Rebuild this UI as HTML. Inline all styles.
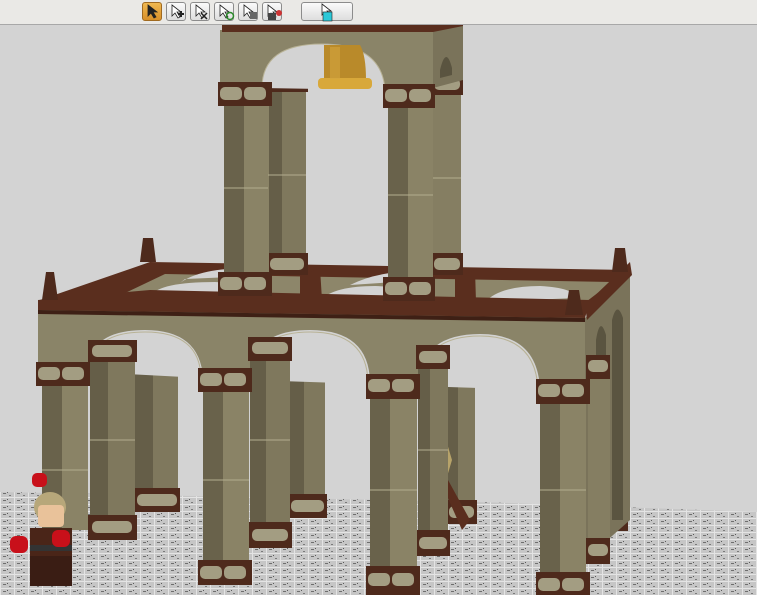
<!DOCTYPE html>
<html><head><style>
html,body{margin:0;padding:0;width:757px;height:595px;overflow:hidden;background:#d3d3d3;font-family:"Liberation Sans",sans-serif}
#tb{position:absolute;left:0;top:0;width:757px;height:24px;background:#eae9e6;border-bottom:1px solid #a8a8a8}
.b{position:absolute;top:2px;width:20px;height:19px;border:1px solid #8c8c8c;border-radius:3px;background:linear-gradient(#fafafa,#dedede);box-sizing:border-box}
.b.on{background:linear-gradient(#f0b850,#d8902a);border-color:#a06a20}
svg{position:absolute;left:0;top:0}
</style></head><body>
<svg width="757" height="595" viewBox="0 0 757 595">
<defs>
<pattern id="fl" width="14" height="7" patternUnits="userSpaceOnUse">
<rect width="14" height="7" fill="#c6c6c6"/>
<rect x="0" y="0" width="14" height="1" fill="#e4e4e4"/>
<rect x="0" y="0" width="1" height="7" fill="#e4e4e4"/>
<rect x="3" y="3" width="3" height="1" fill="#6e6e6e"/>
<rect x="9" y="5" width="2" height="1" fill="#7a7a7a"/>
<rect x="7" y="2" width="1" height="1" fill="#5a5a5a"/>
</pattern>
</defs>
<!-- floor -->
<polygon points="0,492 480,502 757,512 757,595 0,595" fill="url(#fl)"/>

<!-- back deck of lower structure -->
<polygon points="40,300 150,262 630,270 630,285 585,312" fill="#5a2e1e"/>
<polygon points="100,305 165,274 612,282 578,308" fill="#8d866a"/>
<polygon points="100,305 110,296 575,302 578,308" fill="#5a2e1e"/>
<path d="M150,296 Q160,282 215,282 Q260,284 270,298 Z M320,300 Q335,286 375,286 Q410,287 420,301 Z M485,302 Q500,286 540,286 Q575,288 575,298 Z" fill="#d3d3d3"/>
<path d="M180,283 Q200,268 250,268 L255,276 L185,279 Z M350,285 Q380,270 420,272 L425,280 Z" fill="#d3d3d3"/>
<polygon points="300,276 320,268 322,300 300,300" fill="#5a2e1e"/>
<polygon points="455,278 475,270 476,302 455,302" fill="#5a2e1e"/>

<!-- back columns lower -->
<g>
<rect x="135" y="330" width="43" height="170" fill="#7f785d"/><rect x="135" y="330" width="18" height="170" fill="#655e48"/>
<rect x="133" y="326" width="47" height="20" fill="#4e2a1c"/><rect x="137" y="330" width="40" height="12" rx="5" fill="#a39d82"/>
<rect x="133" y="488" width="47" height="24" fill="#4e2a1c"/><rect x="137" y="494" width="40" height="12" rx="5" fill="#a39d82"/>
<rect x="290" y="332" width="35" height="170" fill="#7f785d"/><rect x="290" y="332" width="14" height="170" fill="#655e48"/>
<rect x="288" y="328" width="39" height="18" fill="#4e2a1c"/><rect x="291" y="331" width="33" height="12" rx="5" fill="#a39d82"/>
<rect x="288" y="494" width="39" height="24" fill="#4e2a1c"/><rect x="291" y="500" width="33" height="12" rx="5" fill="#a39d82"/>
<rect x="448" y="340" width="27" height="180" fill="#7f785d"/><rect x="448" y="340" width="10" height="180" fill="#655e48"/>
<rect x="446" y="336" width="31" height="16" fill="#4e2a1c"/>
<rect x="446" y="500" width="31" height="24" fill="#4e2a1c"/><rect x="449" y="506" width="25" height="12" rx="5" fill="#a39d82"/>
<rect x="610" y="335" width="18" height="180" fill="#857e62"/>
<rect x="606" y="505" width="22" height="26" fill="#4e2a1c"/><rect x="608" y="511" width="18" height="12" rx="5" fill="#a39d82"/>
</g>
<!-- brace -->
<polygon points="440,480 448,480 470,520 462,530" fill="#5a2e1e"/>
<polygon points="443,430 452,460 446,480" fill="#b7a36a"/>

<!-- front face of lower structure -->
<polygon points="38,305 585,318 585,385 38,372" fill="#8a8468"/>
<polygon points="38,300 150,290 590,300 585,318 38,310" fill="#5a2e1e"/>
<polygon points="38,310 585,318 585,322 38,314" fill="#3e2015"/>
<path d="M88,372 Q88,330 145,330 Q200,330 203,378 Z M250,380 Q250,330 310,330 Q370,330 370,384 Z M418,386 Q420,334 480,334 Q538,334 540,390 Z" fill="#d3d3d3"/>
<path d="M90,372 Q90,332 145,332 Q200,332 201,378" fill="none" stroke="#b8b295" stroke-width="1"/>
<path d="M252,380 Q252,332 310,332 Q368,332 368,384" fill="none" stroke="#b8b295" stroke-width="1"/>
<path d="M420,386 Q422,336 480,336 Q536,336 538,390" fill="none" stroke="#b8b295" stroke-width="1"/>
<!-- right side face -->
<polygon points="585,318 630,275 630,520 585,560" fill="#7a735a"/>
<polygon points="585,305 630,262 632,275 587,320" fill="#5a2e1e"/>
<path d="M596,340 Q600,315 606,335 L606,560 L596,560 Z M612,320 Q617,300 623,318 L623,520 L612,520 Z" fill="#5a5440"/>
<!-- cones -->
<polygon points="42,300 46,272 54,272 58,300" fill="#4e2a1c"/>
<polygon points="140,262 143,238 153,238 156,262" fill="#4e2a1c"/>
<polygon points="565,315 569,290 579,290 583,315" fill="#4e2a1c"/>
<polygon points="612,272 615,248 625,248 628,272" fill="#4e2a1c"/>

<!-- back front-row lower columns -->
<rect x="90" y="345" width="45" height="180" fill="#7f785d"/><rect x="90" y="345" width="18" height="180" fill="#655e48"/>
<rect x="88" y="340" width="49" height="22" fill="#4e2a1c"/><rect x="92" y="345" width="40" height="12" rx="5" fill="#a39d82"/>
<rect x="88" y="515" width="49" height="25" fill="#4e2a1c"/><rect x="92" y="521" width="40" height="12" rx="5" fill="#a39d82"/>
<rect x="250" y="345" width="40" height="185" fill="#7f785d"/><rect x="250" y="345" width="16" height="185" fill="#655e48"/>
<rect x="248" y="337" width="44" height="24" fill="#4e2a1c"/><rect x="252" y="342" width="36" height="12" rx="5" fill="#a39d82"/>
<rect x="248" y="522" width="44" height="26" fill="#4e2a1c"/><rect x="252" y="529" width="36" height="12" rx="5" fill="#a39d82"/>
<rect x="418" y="355" width="30" height="185" fill="#7f785d"/><rect x="418" y="355" width="12" height="185" fill="#655e48"/>
<rect x="416" y="345" width="34" height="24" fill="#4e2a1c"/><rect x="419" y="351" width="28" height="12" rx="5" fill="#a39d82"/>
<rect x="416" y="530" width="34" height="26" fill="#4e2a1c"/><rect x="419" y="537" width="28" height="12" rx="5" fill="#a39d82"/>
<rect x="588" y="360" width="22" height="185" fill="#857e62"/>
<rect x="586" y="355" width="24" height="24" fill="#4e2a1c"/><rect x="588" y="360" width="20" height="12" rx="5" fill="#a39d82"/>
<rect x="586" y="538" width="24" height="26" fill="#4e2a1c"/><rect x="588" y="544" width="20" height="12" rx="5" fill="#a39d82"/>

<!-- front columns -->
<g>
<rect x="42" y="385" width="46" height="145" fill="#8a8366"/><rect x="42" y="385" width="20" height="145" fill="#69624b"/>
<rect x="36" y="362" width="54" height="24" fill="#4e2a1c"/><rect x="38" y="367" width="22" height="13" rx="5" fill="#a39d82"/><rect x="62" y="367" width="22" height="13" rx="5" fill="#a39d82"/>
<rect x="203" y="392" width="46" height="170" fill="#8a8366"/><rect x="203" y="392" width="20" height="170" fill="#69624b"/>
<rect x="198" y="368" width="54" height="24" fill="#4e2a1c"/><rect x="200" y="373" width="22" height="13" rx="5" fill="#a39d82"/><rect x="224" y="373" width="22" height="13" rx="5" fill="#a39d82"/>
<rect x="198" y="560" width="54" height="25" fill="#4e2a1c"/><rect x="200" y="566" width="22" height="13" rx="5" fill="#a39d82"/><rect x="224" y="566" width="22" height="13" rx="5" fill="#a39d82"/>
<rect x="370" y="398" width="47" height="170" fill="#8a8366"/><rect x="370" y="398" width="20" height="170" fill="#69624b"/>
<rect x="366" y="374" width="54" height="25" fill="#4e2a1c"/><rect x="368" y="379" width="22" height="13" rx="5" fill="#a39d82"/><rect x="392" y="379" width="22" height="13" rx="5" fill="#a39d82"/>
<rect x="366" y="566" width="54" height="29" fill="#4e2a1c"/><rect x="368" y="573" width="22" height="13" rx="5" fill="#a39d82"/><rect x="392" y="573" width="22" height="13" rx="5" fill="#a39d82"/>
<rect x="540" y="404" width="46" height="170" fill="#8a8366"/><rect x="540" y="404" width="20" height="170" fill="#69624b"/>
<rect x="536" y="379" width="54" height="25" fill="#4e2a1c"/><rect x="538" y="384" width="22" height="13" rx="5" fill="#a39d82"/><rect x="562" y="384" width="22" height="13" rx="5" fill="#a39d82"/>
<rect x="536" y="572" width="54" height="23" fill="#4e2a1c"/><rect x="538" y="578" width="22" height="13" rx="5" fill="#a39d82"/><rect x="562" y="578" width="22" height="13" rx="5" fill="#a39d82"/>
</g>
<g stroke="#b3ad8f" stroke-width="1" fill="none">
<path d="M42,470 L88,470 M203,480 L249,480 M370,490 L417,490 M540,490 L586,490 M90,440 L135,440 M250,440 L290,440 M418,450 L448,450"/>
</g>

<!-- TOWER -->
<rect x="268" y="72" width="38" height="200" fill="#7f785d"/><rect x="268" y="72" width="14" height="200" fill="#655e48"/>
<rect x="266" y="70" width="42" height="22" fill="#4e2a1c"/><rect x="270" y="75" width="34" height="12" rx="5" fill="#a39d82"/>
<rect x="266" y="253" width="42" height="22" fill="#4e2a1c"/><rect x="270" y="258" width="34" height="12" rx="5" fill="#a39d82"/>
<rect x="433" y="70" width="28" height="200" fill="#857e62"/>
<rect x="431" y="73" width="32" height="22" fill="#4e2a1c"/><rect x="434" y="78" width="26" height="12" rx="5" fill="#a39d82"/>
<rect x="431" y="253" width="32" height="22" fill="#4e2a1c"/><rect x="434" y="258" width="26" height="12" rx="5" fill="#a39d82"/>
<polygon points="220,30 433,30 433,85 220,85" fill="#8a8468"/>
<polygon points="433,30 463,22 463,80 433,88" fill="#7a735a"/>
<path d="M440,70 Q446,45 452,68 L452,75 L440,78 Z" fill="#5a5440"/>
<polygon points="222,25 433,25 463,20 463,26 433,32 222,32" fill="#5a2e1e"/>
<path d="M262,88 Q262,44 322,44 Q382,44 385,90 Z" fill="#d3d3d3"/>
<path d="M262,88 Q262,44 322,44 Q382,44 385,90" fill="none" stroke="#b8b295"/>
<path d="M324,45 L360,45 Q366,55 366,80 L324,80 Z" fill="#b98a2a"/>
<rect x="318" y="78" width="54" height="11" rx="4" fill="#d8a83a"/>
<rect x="330" y="47" width="10" height="32" fill="#d4a53f" opacity=".6"/>
<rect x="224" y="104" width="45" height="170" fill="#8a8366"/><rect x="224" y="104" width="20" height="170" fill="#69624b"/>
<rect x="218" y="82" width="54" height="24" fill="#4e2a1c"/><rect x="220" y="87" width="22" height="13" rx="5" fill="#a39d82"/><rect x="244" y="87" width="22" height="13" rx="5" fill="#a39d82"/>
<rect x="218" y="272" width="54" height="24" fill="#4e2a1c"/><rect x="220" y="277" width="22" height="13" rx="5" fill="#a39d82"/><rect x="244" y="277" width="22" height="13" rx="5" fill="#a39d82"/>
<rect x="388" y="106" width="45" height="172" fill="#8a8366"/><rect x="388" y="106" width="20" height="172" fill="#69624b"/>
<rect x="383" y="84" width="52" height="24" fill="#4e2a1c"/><rect x="385" y="89" width="22" height="13" rx="5" fill="#a39d82"/><rect x="409" y="89" width="22" height="13" rx="5" fill="#a39d82"/>
<rect x="383" y="277" width="52" height="24" fill="#4e2a1c"/><rect x="385" y="282" width="22" height="13" rx="5" fill="#a39d82"/><rect x="409" y="282" width="22" height="13" rx="5" fill="#a39d82"/>
<g stroke="#b3ad8f" stroke-width="1" fill="none"><path d="M224,188 L268,188 M388,195 L433,195 M268,175 L306,175 M433,178 L461,178"/></g>

<!-- minifig -->
<rect x="32" y="473" width="15" height="14" rx="5" fill="#c8101a"/>
<ellipse cx="50" cy="507" rx="16" ry="15" fill="#b7a77a"/>
<rect x="38" y="505" width="26" height="22" rx="4" fill="#e9c29a"/>
<rect x="30" y="528" width="42" height="28" fill="#4a2518"/>
<rect x="30" y="545" width="42" height="6" fill="#333"/>
<rect x="30" y="556" width="42" height="30" fill="#3a1d14"/>
<rect x="10" y="536" width="18" height="17" rx="6" fill="#c8101a"/>
<rect x="52" y="530" width="18" height="17" rx="6" fill="#c8101a"/>
</svg>
<div id="tb">
<div class="b on" style="left:142px"></div>
<div class="b" style="left:166px"></div>
<div class="b" style="left:190px"></div>
<div class="b" style="left:214px"></div>
<div class="b" style="left:238px"></div>
<div class="b" style="left:262px"></div>
<div class="b" style="left:301px;width:52px"></div>
</div>
<svg width="757" height="24" style="top:0">
<g fill="#fff" stroke="#222" stroke-width="0.8">
<path d="M148,5 l0,11 l3,-3 l3,5 l2,-1 l-3,-5 l4,0 Z" fill="#222"/>
<path d="M172,5 l0,11 l3,-3 l3,5 l2,-1 l-3,-5 l4,0 Z"/>
<path d="M196,5 l0,11 l3,-3 l3,5 l2,-1 l-3,-5 l4,0 Z"/>
<path d="M220,5 l0,11 l3,-3 l3,5 l2,-1 l-3,-5 l4,0 Z"/>
<path d="M244,5 l0,11 l3,-3 l3,5 l2,-1 l-3,-5 l4,0 Z"/>
<path d="M268,5 l0,11 l3,-3 l3,5 l2,-1 l-3,-5 l4,0 Z"/>
<path d="M322,4 l0,11 l3,-3 l3,5 l2,-1 l-3,-5 l4,0 Z"/>
</g>
<path d="M178,14 h6 M181,11 v6" stroke="#222" stroke-width="2"/>
<path d="M201,13 l6,6 M207,13 l-6,6" stroke="#222" stroke-width="1.5"/>
<circle cx="230" cy="16" r="3.5" fill="none" stroke="#2a8a2a" stroke-width="1.5"/>
<rect x="250" y="12" width="7" height="7" fill="#666"/>
<rect x="268" y="13" width="8" height="7" fill="#444"/><circle cx="279" cy="13" r="3" fill="#c33"/>
<rect x="323" y="12" width="9" height="9" fill="#2cc8d8" stroke="#222" stroke-width=".6"/>
</svg>
</body></html>
